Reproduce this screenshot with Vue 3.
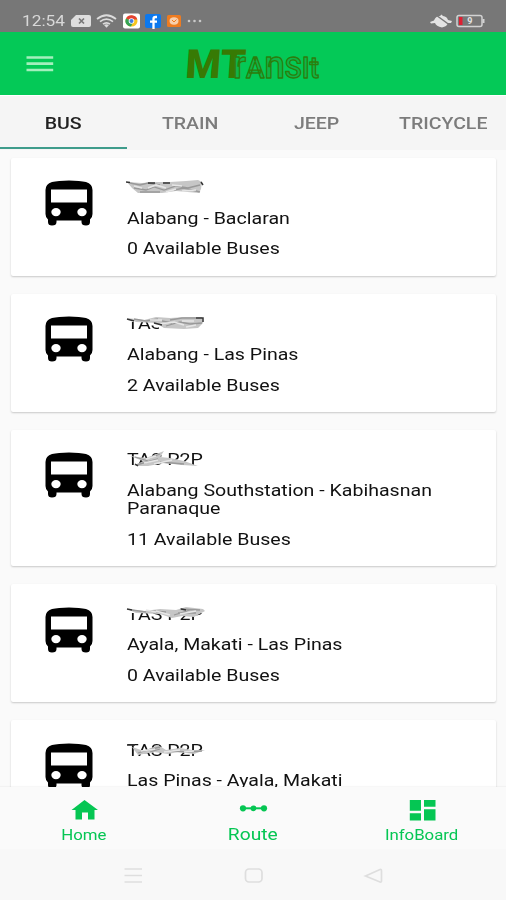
<script setup>
const tabs = [
  { label: 'BUS', active: true },
  { label: 'TRAIN' },
  { label: 'JEEP' },
  { label: 'TRICYCLE' },
]

const routes = [
  {
    lines: ['Alabang - Baclaran'],
    count: '0 Available Buses',
    cover: 'M1 3 L16 4 L30 3 L44 3 L60 2 L72 1 L76 3 L75 10 L73 14 L50 12 L36 14 L12 14 L6 9Z',
    dark: 'M0 3L4 3.500M22 4L29 4M37 4L44 4M75 3L77 6',
    mid: 'M4 4L14 6L22 4L34 6M8 9L20 11L28 8L38 11L50 7L62 9L74 6M14 13L34 13M48 11L58 9L74 13',
    light: 'M8 7L16 9M22 9L30 6L40 9M40 13L50 10M56 12L70 11M46 6L56 7',
  },
  {
    lines: ['Alabang - Las Pinas'],
    count: '2 Available Buses',
    cover: 'M1 3 L18 5 L30 2 L44 3 L60 2 L76 2 L77 8 L72 13 L58 14 L38 13 L30 8 L10 7Z',
    dark: 'M1 4L8 6M28 8L36 10M70 3L77 3L77 7',
    mid: 'M8 4L20 6L32 4M44 5L56 3L70 3M40 11L54 7L64 9L76 8M36 6L46 8',
    light: 'M34 9L48 7L58 10M24 5L36 5M60 12L70 10M56 6L68 6',
  },
  {
    lines: ['Alabang Southstation - Kabihasnan', 'Paranaque'],
    count: '11 Available Buses',
    cover: 'M4 5 L20 7 L38 0 L34 6 L44 7 L58 10 L72 15 L56 14 L38 12 L22 15 L8 15 L17 10Z',
    dark: 'M9 13L12 15',
    mid: 'M9 6L22 10M10 14L32 8M34 11L58 13M24 7L34 3',
    light: 'M18 12L32 9M28 13L46 9M20 8L30 5',
  },
  {
    lines: ['Ayala, Makati - Las Pinas'],
    count: '0 Available Buses',
    cover: 'M1 3 L18 5 L34 3 L50 4 L60 1 L77 3 L79 5 L68 11 L56 10 L46 12 L34 8 L10 7Z',
    dark: 'M1 3L6 4M55 3L60 4',
    mid: 'M6 4L20 6M24 5L40 6M48 9L64 4M54 3L74 4M52 7L70 7',
    light: 'M30 5L44 9M54 8L70 5M20 4L30 6',
  },
  {
    lines: ['Las Pinas - Ayala, Makati'],
    count: '0 Available Buses',
    cover: 'M6 5 L18 9 L32 3 L40 8 L54 6 L66 8 L79 8 L68 12 L52 10 L42 12 L28 10 L12 13Z',
    dark: 'M1 3L9 3',
    mid: 'M12 11L22 8L34 5M24 10L34 7M44 9L62 10L76 9',
    light: 'M15 9L29 7M38 10L54 8M58 10L68 9',
  },
]
</script>

<template>
  <div class="phone">
    <div class="status">
      <span class="clock"><span class="wide">12:54</span></span>
      <svg class="st-left" width="132" height="18" viewBox="0 0 132 18">
        <path d="M5 3H18Q20 3 20 5V13Q20 15 18 15H2Q0 15 0 13V8Z" fill="#dedede" />
        <path d="M8 6.500L13 11.500M13 6.500L8 11.500" stroke="#777" stroke-width="1.700" />
        <g fill="none" stroke="#dcdcdc" stroke-width="1.700">
          <path d="M26 7Q35.500 -.5 45 7" />
          <path d="M29 9.700Q35.500 4.500 42 9.700" />
          <path d="M32 12.200Q35.500 9.500 39 12.200" />
        </g>
        <path d="M33 13Q35.500 11.500 38 13L35.500 15.700Z" fill="#dcdcdc" />
        <rect x="52" y="1.500" width="17" height="15" rx="2" fill="#fff" />
        <ellipse cx="60.500" cy="9" rx="6" ry="5.500" fill="#f7c51e" />
        <path d="M60.500 9L55 6.500A6 5.500 0 0 1 66.300 7.500H60.500Z" fill="#e34133" />
        <path d="M60.500 9L55 6.500A6 5.500 0 0 0 60 14.500L62 10Z" fill="#35a356" />
        <circle cx="60.500" cy="9" r="2.800" fill="#fff" />
        <circle cx="60.500" cy="9" r="2" fill="#447ee2" />
        <rect x="74" y="2" width="16" height="14" rx="2" fill="#0c78ed" />
        <path d="M86 5H84.500Q82.500 5 82.500 7V17M79 9.700H86" fill="none" stroke="#fff" stroke-width="2.300" />
        <rect x="96" y="3" width="14" height="12" rx="1.500" fill="#ee7b20" />
        <ellipse cx="103" cy="9" rx="4.500" ry="3.700" fill="#f7cfad" />
        <path d="M101 8L103 10L105.500 7.500" fill="none" stroke="#ee7b20" />
        <g fill="#c9c9c9"><circle cx="118" cy="9" r="1.300" /><circle cx="123.500" cy="9" r="1.300" /><circle cx="129" cy="9" r="1.300" /></g>
      </svg>
      <svg class="st-right" width="56" height="18" viewBox="0 0 56 18">
        <path d="M0 10L4 8.500Q6 3.500 10 4L11.500 2.500L13 4Q17 4.500 18 8L22 9L21 11L18 11Q17 14.500 12 15.500Q6 14 5 11L1 11.500Z" fill="#e3e3e3" />
        <path d="M6 3L21 14" stroke="#777" stroke-width="1.500" />
        <rect x="27" y="3.500" width="25" height="11" rx="2" fill="none" stroke="#d2d2d2" stroke-width="1.500" />
        <path d="M53.500 7V11" stroke="#d2d2d2" stroke-width="2" />
        <rect x="29" y="5" width="3.500" height="8" fill="#df1f32" />
        <text x="37.300" y="12.300" class="pct">9</text>
      </svg>
    </div>

    <header class="bar">
      <svg class="burger" width="28" height="18" viewBox="0 0 28 18">
        <path d="M.5 2.500H27.200M.5 8.600H27.200M.5 15H27.200" stroke="#a4efbd" stroke-width="2.700" />
      </svg>
      <svg class="logo" width="136" height="34" viewBox="0 0 136 34">
        <text x="1" y="31" textLength="60" lengthAdjust="spacingAndGlyphs" transform="skewX(-4) translate(1 0)" class="solid">MT</text>
        <text x="48" y="30.500" textLength="86" lengthAdjust="spacingAndGlyphs" class="outline"><tspan>r</tspan><tspan class="cap">A</tspan><tspan>n</tspan><tspan class="cap">SIt</tspan></text>
      </svg>
    </header>

    <nav class="tabs">
      <div v-for="t in tabs" :key="t.label" class="tab" :class="{ active: t.active }">
        <span class="wide">{{ t.label }}</span>
      </div>
    </nav>

    <main class="list">
      <article v-for="(r, i) in routes" :key="i" class="card">
        <svg class="bus" width="48" height="48" viewBox="0 0 48 48">
          <path fill-rule="evenodd" fill="#000" d="M0.500 10Q.5 4 7 2Q13 .4 24 .4Q35 .4 41 2Q47.500 4 47.500 10V34Q47.500 37.500 45 39.500V42Q45 45.500 41 45.500Q36.500 45.500 36.500 42V40.500H11.500V42Q11.500 45.500 7 45.500Q3 45.500 3 42V39.500Q.5 37.500 .5 34ZM6 9.500V22.500H42V9.500ZM11 27.900A4.700 4.200 0 1 0 11 36.300A4.700 4.200 0 1 0 11 27.900ZM37 27.900A4.700 4.200 0 1 0 37 36.300A4.700 4.200 0 1 0 37 27.900Z" />
        </svg>
        <div class="info">
          <div class="name">
            <span class="wide">TAS P2P</span>
            <svg class="smear" width="82" height="18" viewBox="0 0 82 18">
              <g v-if="i < 2" fill="#fff"><rect :x="i ? 33 : 0" y="0" width="82" height="18" /><rect y="0" width="82" height="7" /></g>
              <rect v-if="i === 3" width="82" height="7" fill="#fff" />
              <path :d="r.cover" fill="#c6c6c6" />
              <path :d="r.mid" class="mid" />
              <path :d="r.light" class="light" />
              <path :d="r.dark" class="dark" />
            </svg>
          </div>
          <div class="dest">
            <div v-for="l in r.lines" :key="l"><span class="wide">{{ l }}</span></div>
          </div>
          <div><span class="wide">{{ r.count }}</span></div>
        </div>
      </article>
    </main>

    <nav class="bottom">
      <div class="item">
        <svg width="28" height="24" viewBox="0 0 28 24"><path d="M14.500 2L28 12H24.500V21.500H18V14.500H12V21.500H5.500V12H1.500Z" fill="#05c653" /></svg>
        <span class="wide">Home</span>
      </div>
      <div class="item big">
        <svg width="30" height="24" viewBox="0 0 30 24"><path d="M4 10.300H26" stroke="#05c653" stroke-width="2" /><g fill="#05c653"><circle cx="5" cy="10.300" r="3.100" /><circle cx="15.500" cy="10.300" r="2.900" /><circle cx="26" cy="10.300" r="3.100" /></g></svg>
        <span class="wide">Route</span>
      </div>
      <div class="item">
        <svg width="28" height="24" viewBox="0 0 28 24"><path d="M1.800 2H13V12.700H1.800ZM16 2H27.500V8.700H16ZM1.800 15.200H13V22.500H1.800ZM16 11.200H27.500V22.500H16Z" fill="#05c653" /></svg>
        <span class="wide">InfoBoard</span>
      </div>
    </nav>

    <footer class="system">
      <svg width="260" height="18" viewBox="0 0 260 18" fill="none" stroke="#dedede" stroke-width="1.700">
        <path d="M1.500 3H19M1.500 9.500H19M1.500 16H19" />
        <rect x="122.500" y="3" width="16.500" height="13" rx="3.500" />
        <path d="M242.500 10L257 3.500Q258.500 3 258.500 5V14.500Q258.500 16.500 257 16Z" />
      </svg>
    </footer>
  </div>
</template>

<style>
body {
  margin: 0;
  overflow: hidden;
}
</style>

<style scoped>
.phone {
  width: 506px;
  height: 900px;
  display: flex;
  flex-direction: column;
  overflow: hidden;
  background: #fafafa;
  font-family: Roboto, "Liberation Sans", sans-serif;
  color: #111;
}
.wide {
  display: inline-block;
  white-space: nowrap;
  transform: scaleX(1.2);
  transform-origin: left;
}
.status {
  flex: 0 0 32px;
  box-sizing: border-box;
  display: flex;
  align-items: center;
  padding: 10px 20px 0 22px;
  background: #777;
}
.clock {
  width: 49px;
  font-size: 15px;
  line-height: 20px;
  color: #d8d8d8;
}
.clock .wide { transform: scaleX(1.15); }
.st-right { margin-left: auto; }
.pct { font-size: 9px; font-weight: 700; fill: #e3e3e3; }
.bar {
  flex: 0 0 63px;
  display: flex;
  align-items: center;
  background: #04c957;
}
.burger { margin-left: 26px; }
.logo { margin-left: 131px; overflow: visible; }
.solid {
  fill: #377a04;
  font-weight: 900;
  font-size: 40px;
}
.outline {
  font-size: 38px;
  font-weight: 500;
  fill: #0fb548;
  stroke: #2b7e0c;
  stroke-width: 1.3;
  stroke-linejoin: round;
}
.cap { font-size: 29px; }
.tabs {
  flex: 0 0 55px;
  display: grid;
  grid-template-columns: repeat(4, 1fr);
  background: #f5f5f5;
  box-shadow: inset 0 1px #fff;
}
.tab {
  display: flex;
  align-items: center;
  justify-content: center;
  box-sizing: border-box;
  border-bottom: 2.5px solid transparent;
  margin-bottom: 1px;
  padding-top: 4px;
  font-size: 16px;
  font-weight: 500;
  color: #7c7c7c;
}
.tab .wide, .item .wide { transform-origin: center; }
.tab.active { color: #222; border-color: #3e9c8b; }
.tab .wide { transform: scaleX(1.22); }
.list {
  flex: 1 1 0;
  min-height: 0;
  overflow: hidden;
  display: flex;
  flex-direction: column;
  gap: 17.900px;
  padding: 7.500px 10px 0 11px;
}
.card {
  flex: none;
  display: flex;
  box-sizing: border-box;
  padding: 20.500px 0 17.900px 34px;
  border-radius: 2px;
  background: #fff;
  box-shadow: 0 1px 2px rgba(0, 0, 0, .2);
}
.bus { margin-top: 2px; }
.info {
  margin-left: 34px;
  display: flex;
  flex-direction: column;
  gap: 12.300px;
  font-size: 15.700px;
  line-height: 18.400px;
}
.info .wide { transform: scaleX(1.247); }
.info > div { position: relative; top: 1px; }
.smear {
  position: absolute;
  left: -1px;
  top: 0;
  filter: blur(.6px);
}
.dark { fill: none; stroke: #333; stroke-width: 1.5; }
.mid { fill: none; stroke: #999; stroke-width: 1.3; }
.light { fill: none; stroke: #e6e6e6; stroke-width: 1.7; }
.bottom {
  flex: 0 0 62px;
  display: grid;
  grid-template-columns: repeat(3, 1fr);
  background: #fafafa;
  box-shadow: 0 -1px 1px rgba(0, 0, 0, .03);
  position: relative;
}
.item {
  display: flex;
  flex-direction: column;
  align-items: center;
  padding-top: 11px;
  font-size: 14px;
  line-height: 26px;
  color: #05c653;
}
.item.big { font-size: 16px; line-height: 25px; }
.system {
  flex: 0 0 51px;
  display: flex;
  justify-content: center;
  align-items: center;
  background: #f8f8f8;
}
</style>
